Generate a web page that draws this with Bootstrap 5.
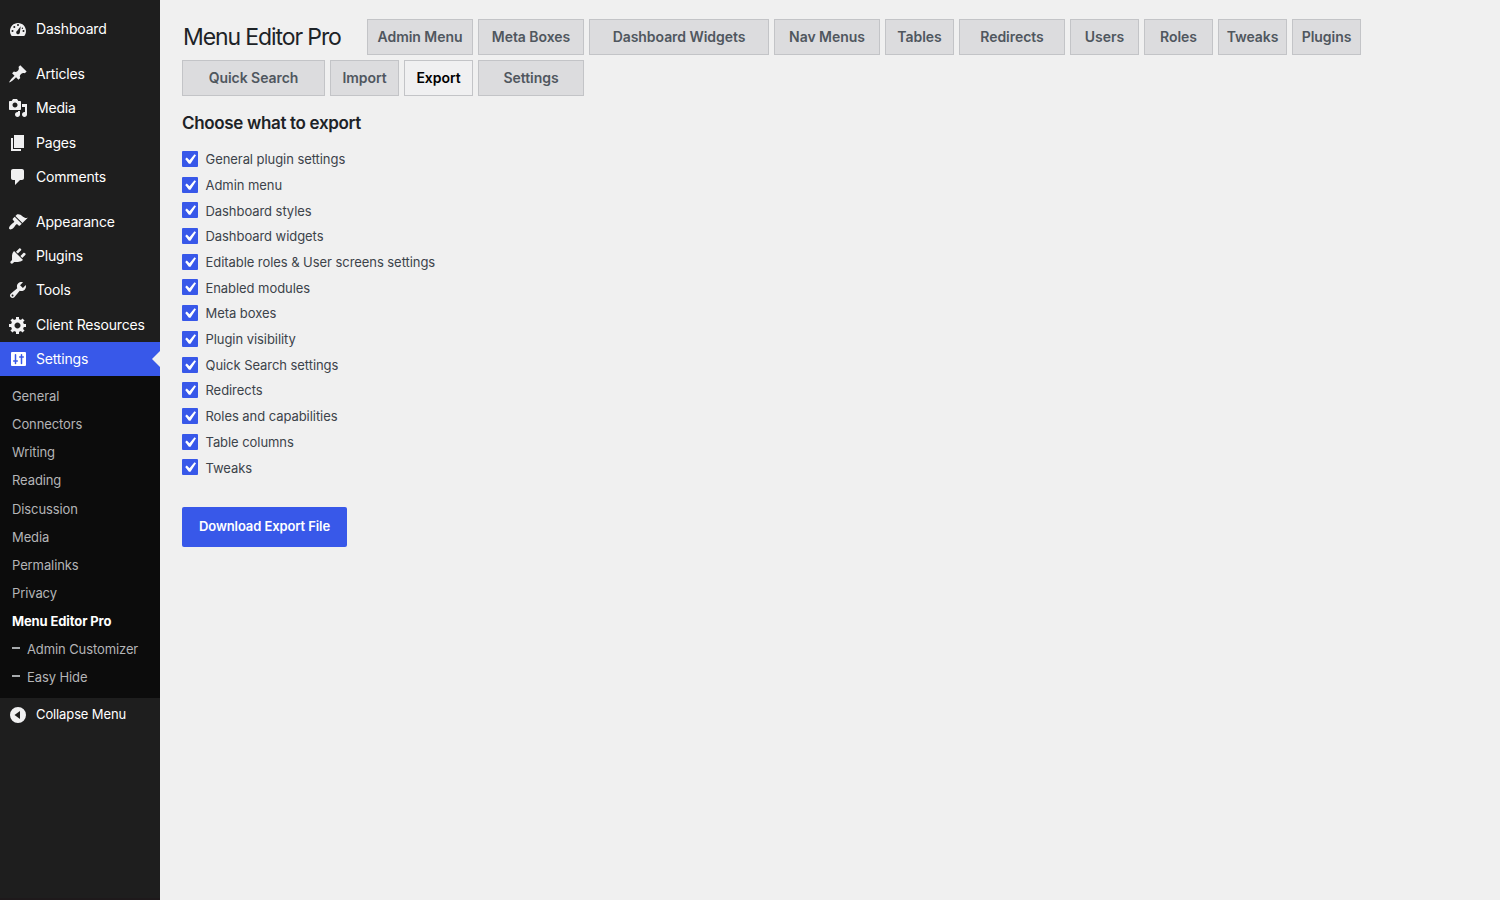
<!DOCTYPE html>
<html lang="en">
<head>
<meta charset="utf-8">
<meta name="viewport" content="width=device-width, initial-scale=1">
<title>Menu Editor Pro</title>
<link href="https://cdn.jsdelivr.net/npm/bootstrap@5.3.0/dist/css/bootstrap.min.css" rel="stylesheet">
<style>
body{background:#f0f0f0;font-family:Inter,"Liberation Sans",sans-serif;font-size:13px;color:#3c434a;overflow:hidden}
a{text-decoration:none}
.sidebar{width:160px;background:#1e1e1e;padding-top:12px;border-bottom:2px solid #1e191b}
.side-link{height:34.28px;padding:0 0 0 8px;gap:8px;color:#fff;font-size:14px;letter-spacing:-.18px;white-space:nowrap}
.side-link>span{padding-bottom:1px}
.side-link svg{width:20px;height:20px;fill:#f0f0f1;flex:none}
.side-link.active{background:#3858e9;position:relative}
.side-link.active svg{fill:#fff}
.side-link.active::after{content:"";position:absolute;right:0;top:9px;border:8px solid transparent;border-right-color:#f0f0f0;border-left:0}
.side-gap{height:10.75px}
.submenu{background:#0c0c0c;padding:6.6px 0 5.6px 12px}
.submenu a{height:28.14px;color:#b4b5b7;font-size:13px;letter-spacing:-.1px}
.submenu a.current{color:#fff;font-weight:700;letter-spacing:-.12px}
.dash{width:8px;height:2px;background:#a7aaad;margin:-4px 7px 0 0}
.collapse-link{font-size:13px;letter-spacing:-.12px}
.collapse-link>span{padding:0}
main{padding:19px 0 0 22px}
h1{font-size:23px;font-weight:400;color:#1d2327;height:36px;line-height:36px;width:180px;padding-left:1px;letter-spacing:-1.1px;white-space:nowrap}
.tabs{gap:5px;width:1190px}
.tab{height:36px;border:1px solid #c3c4c7;background:#dcdcde;color:#50575e;font-weight:600;font-size:14px;letter-spacing:-.05px;padding-bottom:2px;white-space:nowrap}
.tab.active{background:#f0f0f1;color:#000}
.w1{width:69px}.w2{width:106px}.w3{width:143px}.w4{width:180px}
h2{font-size:17px;font-weight:600;color:#1d2327;margin:17px 0 13.2px;line-height:20px;letter-spacing:-.33px}
.option{height:25.7px;gap:7.5px}
.option svg{width:16px;height:16px;border-radius:1px;background:#3858e9;flex:none}
.option span{padding-top:2px;letter-spacing:-.06px}
.btn-export{width:165px;height:40px;border-radius:2px;background:#3858e9;color:#fff;font-size:13px;font-weight:600;letter-spacing:-.1px;padding:0 0 1px;margin-top:26.7px}
</style>
</head>
<body>
<svg class="d-none"><symbol id="tick" viewBox="0 0 16 16"><path fill="#fff" d="M12.500 3.200l1.500 1-5.500 8.600H6.900L3.200 8.100l1.600-1.500 2.700 2.700z"/></symbol></svg>
<div class="d-flex vh-100">
<nav class="sidebar d-flex flex-column flex-shrink-0">
<a href="#" class="side-link d-flex align-items-center"><svg viewBox="0 0 20 20"><path fill-rule="evenodd" d="M3.760 17h12.480c1.100-1.370 1.760-3.110 1.760-5 0-4.420-3.580-8-8-8s-8 3.580-8 8c0 1.890.66 3.630 1.760 5zM9 6a1 1 0 1 1 2 0 1 1 0 0 1-2 0zM5.300 8a1 1 0 1 1 2 0 1 1 0 0 1-2 0zM3.500 12a1 1 0 1 1 2 0 1 1 0 0 1-2 0zM14.500 12a1 1 0 1 1 2 0 1 1 0 0 1-2 0zM12.700 7.200l-.9 6.900a1.850 1.850 0 1 1-2.500-2.300zM13.700 9.200a.7.7 0 1 1 1.400 0 .7.7 0 0 1-1.400 0z"/></svg><span>Dashboard</span></a>
<div class="side-gap"></div>
<a href="#" class="side-link d-flex align-items-center"><svg viewBox="0 0 20 20"><path d="M10.440 3.020l1.820-1.820 6.360 6.350-1.830 1.820c-1.050-.68-2.480-.57-3.410.36l-.75.75c-.92.93-1.040 2.350-.35 3.410l-1.830 1.820-2.410-2.410-2.800 2.790c-.42.42-3.380 2.710-3.800 2.290s1.860-3.390 2.280-3.810l2.790-2.790L4.100 9.360l1.830-1.820c1.050.69 2.480.57 3.400-.36l.75-.75c.93-.92 1.050-2.350.36-3.410z"/></svg><span>Articles</span></a>
<a href="#" class="side-link d-flex align-items-center"><svg viewBox="0 0 20 20"><path fill-rule="evenodd" d="M13 11V4c0-.55-.45-1-1-1h-1.670L9 1H5L3.670 3H2c-.55 0-1 .45-1 1v7c0 .55.45 1 1 1h10c.55 0 1-.45 1-1zM7 4.500c1.380 0 2.500 1.120 2.500 2.500S8.380 9.500 7 9.500 4.500 8.380 4.500 7 5.620 4.500 7 4.500zM14 6h5v10.500c0 1.380-1.120 2.500-2.500 2.500S14 17.880 14 16.500s1.120-2.500 2.500-2.500c.17 0 .34.020.5.050V9h-3V6zm-4 8.050V13h2v3.500c0 1.380-1.120 2.500-2.500 2.500S7 17.880 7 16.500 8.120 14 9.500 14c.17 0 .34.020.5.050z"/></svg><span>Media</span></a>
<a href="#" class="side-link d-flex align-items-center"><svg viewBox="0 0 20 20"><path d="M6 15V2h10v13H6zm-1 1h8v2H3V5h2v11z"/></svg><span>Pages</span></a>
<a href="#" class="side-link d-flex align-items-center"><svg viewBox="0 0 20 20"><path d="M5 2h9c1.100 0 2 .9 2 2v7c0 1.100-.9 2-2 2h-2l-5 5v-5H5c-1.100 0-2-.9-2-2V4c0-1.100.9-2 2-2z"/></svg><span>Comments</span></a>
<div class="side-gap"></div>
<a href="#" class="side-link d-flex align-items-center"><svg viewBox="0 0 20 20"><path d="M14.480 11.060L7.410 3.990l1.500-1.500c.5-.56 2.300-.47 3.510.32 1.210.8 1.430 1.280 2.910 2.100 1.180.64 2.450 1.260 4.450.85zm-.71.71L6.700 4.700 4.930 6.470c-.39.39-.39 1.020 0 1.410l1.060 1.060c.39.39.39 1.030 0 1.420-.6.6-1.430 1.110-2.210 1.690-.35.26-.7.53-1.010.84C1.430 14.230.4 16.080 1.400 17.070c.99 1 2.840-.03 4.180-1.360.31-.31.58-.66.850-1.020.57-.78 1.080-1.610 1.690-2.210.39-.39 1.020-.39 1.410 0l1.060 1.060c.39.39 1.020.39 1.410 0z"/></svg><span>Appearance</span></a>
<a href="#" class="side-link d-flex align-items-center"><svg viewBox="0 0 20 20"><path d="M13.110 4.360L9.870 7.600 8 5.730l3.240-3.240c.35-.34 1.050-.2 1.560.32.52.51.66 1.210.31 1.550zm-8 1.770l.91-1.120 9.010 9.010-1.190.84c-.71.71-2.630 1.160-3.820 1.160H6.140L4.900 17.260c-.59.59-1.540.59-2.120 0-.59-.58-.59-1.530 0-2.120l1.240-1.240v-3.880c0-1.130.4-3.190 1.090-3.890zm7.260 3.970l3.240-3.240c.34-.35 1.040-.21 1.550.31.52.51.66 1.210.31 1.550l-3.240 3.250z"/></svg><span>Plugins</span></a>
<a href="#" class="side-link d-flex align-items-center"><svg viewBox="0 0 20 20"><path fill-rule="evenodd" d="M16.680 9.770c-1.340 1.340-3.300 1.670-4.950.99l-5.410 6.520c-.99.99-2.590.99-3.580 0s-.99-2.590 0-3.570l6.520-5.420c-.68-1.650-.35-3.610.99-4.950 1.280-1.280 3.120-1.620 4.720-1.060l-2.890 2.890 2.820 2.820 2.860-2.870c.53 1.580.18 3.390-1.080 4.650zM3.810 16.210c.4.39 1.040.39 1.430 0 .4-.4.4-1.040 0-1.430-.39-.4-1.030-.4-1.430 0-.39.39-.39 1.030 0 1.430z"/></svg><span>Tools</span></a>
<a href="#" class="side-link d-flex align-items-center"><svg viewBox="0 0 20 20"><path fill-rule="evenodd" d="M18 12h-2.180c-.17.7-.44 1.350-.81 1.930l1.540 1.540-2.100 2.100-1.540-1.540c-.58.36-1.230.63-1.910.79V19H8v-2.180c-.68-.16-1.330-.43-1.910-.79l-1.540 1.540-2.120-2.120 1.540-1.540c-.36-.58-.63-1.230-.79-1.910H1V9.030h2.170c.16-.7.44-1.350.8-1.940L2.430 5.550l2.100-2.100 1.540 1.540c.58-.37 1.240-.64 1.930-.81V2h3v2.180c.68.16 1.330.43 1.910.79l1.540-1.540 2.120 2.120-1.540 1.540c.36.59.64 1.240.8 1.940H18V12zm-8.500 1.500c1.660 0 3-1.340 3-3s-1.340-3-3-3-3 1.340-3 3 1.340 3 3 3z"/></svg><span>Client Resources</span></a>
<a href="#" class="side-link active d-flex align-items-center"><svg viewBox="0 0 20 20"><rect x="3" y="3" width="15" height="14" rx="1"/><path fill="none" stroke="#3858e9" stroke-width="1.500" stroke-linecap="round" d="M7.500 5.700v8.800M5.700 12h3.600M13.500 5.700v8.800M11.700 8h3.600"/></svg><span>Settings</span></a>
<div class="submenu">
<a href="#" class="d-flex align-items-center">General</a>
<a href="#" class="d-flex align-items-center">Connectors</a>
<a href="#" class="d-flex align-items-center">Writing</a>
<a href="#" class="d-flex align-items-center">Reading</a>
<a href="#" class="d-flex align-items-center">Discussion</a>
<a href="#" class="d-flex align-items-center">Media</a>
<a href="#" class="d-flex align-items-center">Permalinks</a>
<a href="#" class="d-flex align-items-center">Privacy</a>
<a href="#" class="current d-flex align-items-center">Menu Editor Pro</a>
<a href="#" class="d-flex align-items-center"><span class="dash"></span>Admin Customizer</a>
<a href="#" class="d-flex align-items-center"><span class="dash"></span>Easy Hide</a>
</div>
<a href="#" class="side-link collapse-link d-flex align-items-center"><svg viewBox="0 0 20 20"><path fill-rule="evenodd" d="M10 2a8 8 0 1 1 0 16 8 8 0 0 1 0-16zM12 6v8l-5.500-4z"/></svg><span>Collapse Menu</span></a>
</nav>
<main class="flex-grow-1">
<div class="tabs d-flex flex-wrap">
<h1 class="m-0">Menu Editor Pro</h1>
<a href="#" class="tab w2 d-flex align-items-center justify-content-center">Admin Menu</a>
<a href="#" class="tab w2 d-flex align-items-center justify-content-center">Meta Boxes</a>
<a href="#" class="tab w4 d-flex align-items-center justify-content-center">Dashboard Widgets</a>
<a href="#" class="tab w2 d-flex align-items-center justify-content-center">Nav Menus</a>
<a href="#" class="tab w1 d-flex align-items-center justify-content-center">Tables</a>
<a href="#" class="tab w2 d-flex align-items-center justify-content-center">Redirects</a>
<a href="#" class="tab w1 d-flex align-items-center justify-content-center">Users</a>
<a href="#" class="tab w1 d-flex align-items-center justify-content-center">Roles</a>
<a href="#" class="tab w1 d-flex align-items-center justify-content-center">Tweaks</a>
<a href="#" class="tab w1 d-flex align-items-center justify-content-center">Plugins</a>
<a href="#" class="tab w3 d-flex align-items-center justify-content-center">Quick Search</a>
<a href="#" class="tab w1 d-flex align-items-center justify-content-center">Import</a>
<a href="#" class="tab w1 active d-flex align-items-center justify-content-center">Export</a>
<a href="#" class="tab w2 d-flex align-items-center justify-content-center">Settings</a>
</div>
<h2>Choose what to export</h2>
<div class="options">
<label class="option d-flex align-items-center"><svg><use href="#tick"/></svg><span>General plugin settings</span></label>
<label class="option d-flex align-items-center"><svg><use href="#tick"/></svg><span>Admin menu</span></label>
<label class="option d-flex align-items-center"><svg><use href="#tick"/></svg><span>Dashboard styles</span></label>
<label class="option d-flex align-items-center"><svg><use href="#tick"/></svg><span>Dashboard widgets</span></label>
<label class="option d-flex align-items-center"><svg><use href="#tick"/></svg><span>Editable roles &amp; User screens settings</span></label>
<label class="option d-flex align-items-center"><svg><use href="#tick"/></svg><span>Enabled modules</span></label>
<label class="option d-flex align-items-center"><svg><use href="#tick"/></svg><span>Meta boxes</span></label>
<label class="option d-flex align-items-center"><svg><use href="#tick"/></svg><span>Plugin visibility</span></label>
<label class="option d-flex align-items-center"><svg><use href="#tick"/></svg><span>Quick Search settings</span></label>
<label class="option d-flex align-items-center"><svg><use href="#tick"/></svg><span>Redirects</span></label>
<label class="option d-flex align-items-center"><svg><use href="#tick"/></svg><span>Roles and capabilities</span></label>
<label class="option d-flex align-items-center"><svg><use href="#tick"/></svg><span>Table columns</span></label>
<label class="option d-flex align-items-center"><svg><use href="#tick"/></svg><span>Tweaks</span></label>
</div>
<button type="button" class="btn btn-export d-block">Download Export File</button>
</main>
</div>
<script src="https://cdn.jsdelivr.net/npm/bootstrap@5.3.0/dist/js/bootstrap.bundle.min.js"></script>
</body>
</html>
